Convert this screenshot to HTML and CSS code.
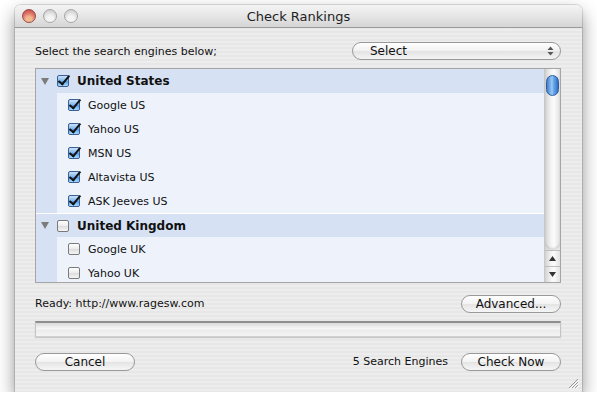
FILE: index.html
```html
<!DOCTYPE html>
<html>

<head>
    <meta charset="UTF-8">
    <title>Check Rankings</title>
    <link rel="stylesheet" href="styles.css">
</head>

<body>
    <div class="window">
        <div class="titlebar">
            <div class="lights">
                <span class="light close"></span>
                <span class="light"></span>
                <span class="light"></span>
            </div>
            <div class="title">Check Rankings</div>
        </div>

        <div class="content">
            <div class="top-row">
                <span>Select the search engines below;</span>
                <div class="popup">
                    <span>Select</span>
                    <svg class="popup-arrows" width="7" height="10" viewBox="0 0 7 10">
                        <path d="M3.5 0.5 L6.5 4 L0.5 4 Z M3.5 9.5 L6.5 6 L0.5 6 Z" fill="#555" />
                    </svg>
                </div>
            </div>

            <div class="list">
                <div class="rows">
                    <div class="row group">
                        <span class="disclosure"></span>
                        <span class="check on"></span>
                        <span class="group-name">United States</span>
                    </div>
                    <div class="row item"><span class="check on"></span><span>Google US</span></div>
                    <div class="row item"><span class="check on"></span><span>Yahoo US</span></div>
                    <div class="row item"><span class="check on"></span><span>MSN US</span></div>
                    <div class="row item"><span class="check on"></span><span>Altavista US</span></div>
                    <div class="row item"><span class="check on"></span><span>ASK Jeeves US</span></div>
                    <div class="row group">
                        <span class="disclosure"></span>
                        <span class="check"></span>
                        <span class="group-name">United Kingdom</span>
                    </div>
                    <div class="row item"><span class="check"></span><span>Google UK</span></div>
                    <div class="row item"><span class="check"></span><span>Yahoo UK</span></div>
                </div>
                <div class="scrollbar">
                    <div class="track">
                        <div class="thumb"></div>
                    </div>
                    <div class="arrow">
                        <svg width="7" height="5" viewBox="0 0 7 5"><path d="M3.5 0 L7 5 L0 5 Z" fill="#333" /></svg>
                    </div>
                    <div class="arrow">
                        <svg width="7" height="5" viewBox="0 0 7 5"><path d="M3.5 5 L7 0 L0 0 Z" fill="#333" /></svg>
                    </div>
                </div>
            </div>

            <div class="status-row">
                <span>Ready: http://www.ragesw.com</span>
                <button class="btn">Advanced...</button>
            </div>

            <div class="progress"></div>

            <div class="bottom-row">
                <button class="btn">Cancel</button>
                <div class="right-group">
                    <span>5 Search Engines</span>
                    <button class="btn">Check Now</button>
                </div>
            </div>
        </div>

        <!-- resize grip -->
        <svg class="grip" width="11" height="11" viewBox="0 0 11 11">
            <path d="M10 1 L1 10 M10 4 L4 10 M10 7 L7 10" stroke="#999" stroke-width="1" />
            <path d="M11 2 L2 11 M11 5 L5 11 M11 8 L8 11" stroke="#fff" stroke-width="1" />
        </svg>
    </div>
</body>

</html>
```

FILE: styles.css
```css
body {
    margin: 0;
    padding: 0;
    background: #fff;
    font-family: "Lucida Grande", "DejaVu Sans", sans-serif;
    font-size: 11px;
    color: #111;
}

.window {
    position: relative;
    width: 567px;
    height: 387px;
    margin: 5px 0 0 15px;
    border-radius: 6px 6px 0 0;
    background: repeating-linear-gradient(#ededed 0 2px, #e7e7e7 2px 4px);
    box-shadow: 0 8px 18px rgba(0, 0, 0, 0.45), 0 0 0 1px rgba(0, 0, 0, 0.12);
    display: flex;
    flex-direction: column;
}

.titlebar {
    position: relative;
    height: 22px;
    border-radius: 6px 6px 0 0;
    border-bottom: 1px solid #9b9b9b;
    background: linear-gradient(#f4f4f4, #e6e6e6 50%, #d5d5d5);
    display: flex;
    align-items: center;
    justify-content: center;
}

.lights {
    position: absolute;
    left: 7px;
    top: 4px;
    display: flex;
    gap: 7px;
}

.light {
    width: 14px;
    height: 14px;
    border-radius: 50%;
    box-sizing: border-box;
    border: 1px solid #a7a7a7;
    background: radial-gradient(circle at 50% 75%, #f4f4f4 0 30%, #d6d6d6 70%, #c4c4c4);
}

.light.close {
    border-color: #9a4a48;
    background: radial-gradient(circle at 50% 80%, #f2b98c 0 25%, #e07a6e 55%, #c64a45 90%);
}

.title {
    font-size: 13px;
    color: #222;
}

.content {
    flex: 1;
    padding: 14px 21px 0 20px;
    display: flex;
    flex-direction: column;
}

.top-row {
    height: 18px;
    display: flex;
    align-items: center;
    justify-content: space-between;
}

.popup {
    width: 209px;
    height: 18px;
    box-sizing: border-box;
    border: 1px solid #999;
    border-radius: 9px;
    background: linear-gradient(#ffffff, #f1f1f1 50%, #e3e3e3 51%, #f4f4f4);
    display: flex;
    align-items: center;
    justify-content: space-between;
    padding: 0 6px 0 17px;
    font-size: 12px;
}

.list {
    margin-top: 8px;
    height: 215px;
    box-sizing: border-box;
    border: 1px solid #a5a5a5;
    display: flex;
    overflow: hidden;
}

.rows {
    flex: 1;
    background: linear-gradient(90deg, #d6e1f3 0 21px, #edf2fb 21px);
}

.row {
    height: 24px;
    display: flex;
    align-items: center;
}

.group {
    background: #d6e1f3;
    font-weight: bold;
    font-size: 12px;
    border-top: 1px solid #fff;
    box-sizing: border-box;
}

.group:first-child {
    border-top: none;
}

.disclosure {
    width: 0;
    height: 0;
    margin: 0 8px 0 5px;
    border-left: 4px solid transparent;
    border-right: 4px solid transparent;
    border-top: 7px solid #7c7c7c;
}

.group-name {
    margin-left: 8px;
}

.item {
    padding-left: 32px;
}

.item .check {
    margin-right: 8px;
}

.check {
    width: 12px;
    height: 12px;
    box-sizing: border-box;
    border: 1px solid #7a7a7a;
    border-radius: 2px;
    background: linear-gradient(#ffffff, #ececec 50%, #dcdcdc 51%, #f6f6f6);
    position: relative;
}

.check.on {
    border-color: #385f96;
    background: linear-gradient(#c9e2fb, #7eb4ea 50%, #4f97e2 51%, #a9dafc);
}

.check.on::after {
    content: "";
    position: absolute;
    left: 3px;
    top: -3px;
    width: 4px;
    height: 10px;
    border-right: 2px solid #111;
    border-bottom: 2px solid #111;
    transform: rotate(40deg);
}

.scrollbar {
    width: 15px;
    border-left: 1px solid #c8c8c8;
    display: flex;
    flex-direction: column;
    background: linear-gradient(90deg, #d2d2d2, #f4f4f4 40%, #fbfbfb 60%, #e2e2e2);
}

.track {
    flex: 1;
    padding: 6px 1px 0 1px;
    border-bottom-left-radius: 7px;
    border-bottom-right-radius: 7px;
    box-shadow: inset 0 -2px 2px rgba(0, 0, 0, 0.12);
}

.thumb {
    width: 13px;
    height: 21px;
    box-sizing: border-box;
    border: 1px solid #2d5d9c;
    border-radius: 7px;
    background: linear-gradient(90deg, #3d7fd0, #9cc9f5 45%, #6aa8ec 60%, #2f6fc3);
}

.arrow {
    height: 15px;
    display: flex;
    align-items: center;
    justify-content: center;
    border-top: 1px solid #bdbdbd;
}

.status-row,
.bottom-row {
    height: 17px;
    margin-top: 12px;
    display: flex;
    align-items: center;
    justify-content: space-between;
}

.bottom-row {
    margin-top: 16px;
}

.right-group {
    display: flex;
    align-items: center;
    gap: 13px;
}

.progress {
    margin-top: 9px;
    height: 16px;
    box-sizing: border-box;
    border-top: 2px solid #8e8e8e;
    border-left: 1px solid #c4c4c4;
    border-right: 1px solid #c4c4c4;
    border-bottom: 1px solid #d0d0d0;
    background: linear-gradient(#dadada, #f7f7f7 45%, #ebebeb 55%, #f5f5f5);
    box-shadow: 0 1px 1px rgba(0, 0, 0, 0.15);
}

.btn {
    width: 100px;
    height: 18px;
    padding: 0;
    border: 1px solid #999;
    border-radius: 9px;
    background: linear-gradient(#ffffff, #f2f2f2 50%, #e4e4e4 51%, #f6f6f6);
    font-family: "Lucida Grande", "DejaVu Sans", sans-serif;
    font-size: 12px;
    color: #111;
}

.grip {
    position: absolute;
    right: 3px;
    bottom: 3px;
}
```
